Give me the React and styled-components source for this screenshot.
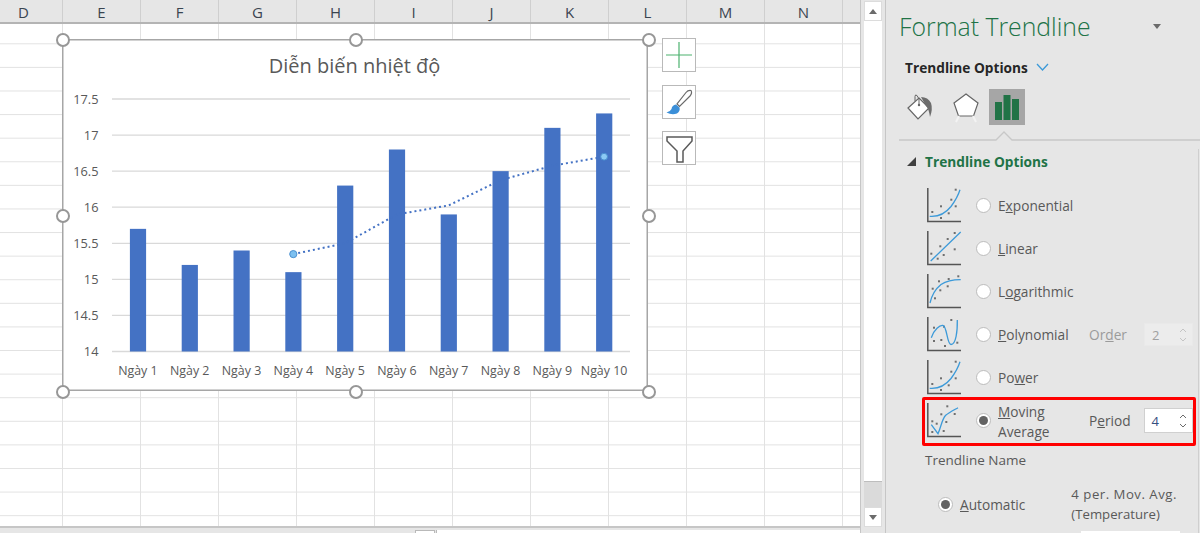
import styled, { createGlobalStyle } from 'styled-components'

const columns = ['D', 'E', 'F', 'G', 'H', 'I', 'J', 'K', 'L', 'M', 'N']
const days = [15.7, 15.2, 15.4, 15.1, 16.3, 16.8, 15.9, 16.5, 17.1, 17.3]
const ticks = [17.5, 17, 16.5, 16, 15.5, 15, 14.5, 14]
const handles = [[0, 0], [50, 0], [100, 0], [0, 50], [100, 50], [0, 100], [50, 100], [100, 100]]

// chart drawing coordinates, origin at the frame corner
const plotLeft = 50
const plotWidth = 518
const topY = 60
const baseY = 312.5
const yOf = (v) => baseY - ((v - 14) / 3.5) * (baseY - topY)
const xOf = (i) => plotLeft + (plotWidth / 10) * (i + 0.5)
const trend = days
  .map((_, i) => (i < 3 ? null : (days[i] + days[i - 1] + days[i - 2] + days[i - 3]) / 4))
  .map((v, i) => (v === null ? null : [xOf(i), yOf(v)]))
  .filter(Boolean)

const GlobalStyle = createGlobalStyle`
  html, body { margin: 0; padding: 0; background: #e6e6e6; }
  body { font-family: "Open Sans", "Noto Sans", sans-serif; overflow: hidden; }
`

const Window = styled.div`
  display: flex;
  width: 1200px;
  height: 533px;
  overflow: hidden;
`

const SheetColumn = styled.div`
  position: relative;
  width: 860px;
  flex: none;
  display: flex;
  flex-direction: column;
  background: #fff;
`

const HeaderRow = styled.div`
  display: flex;
  height: 22px;
  flex: none;
  margin-left: -15px;
  background: #e6e6e6;
  border-bottom: 2px solid #b4b4b4;
`

const ColHead = styled.div`
  width: 78px;
  flex: none;
  box-sizing: border-box;
  border-right: 1px solid #cfcfcf;
  text-align: center;
  font-size: 15px;
  line-height: 25px;
  color: #3a4450;
`

const Cells = styled.div`
  flex: 1;
  background-color: #fff;
  background-image: linear-gradient(to right, #e2e2e2 1px, transparent 1px),
    linear-gradient(to bottom, #e2e2e2 1px, transparent 1px);
  background-size: 78px 100%, 100% 23.6px;
  background-position: 62px 0, 0 19.3px;
`

const BottomBar = styled.div`
  height: 5px;
  flex: none;
  display: flex;
  padding-left: 34px;
  background: #e6e6e6;
  border-top: 2px solid #c6c6c6;
`

const HScrollEnd = styled.div`
  margin-left: 381px;
  width: 18px;
  background: #fff;
  border: 1px solid #b9b9b9;
  border-bottom: 0;
  margin-top: 2px;
`

const HScrollThumb = styled.div`
  flex: 1;
  margin: 2px 0 0 1px;
  background: #fff;
  border-left: 1px solid #b9b9b9;
`

const VScroll = styled.div`
  width: 26px;
  flex: none;
  box-sizing: border-box;
  padding: 1px 3px 0 3px;
  display: flex;
  flex-direction: column;
  background: #e6e6e6;
  border-left: 1px solid #c6c6c6;
  border-right: 1px solid #c6c6c6;
`

const ScrollButton = styled.div`
  height: 20px;
  flex: none;
  background: #fff;
  border: 1px solid #dcdcdc;
  box-sizing: border-box;
  display: flex;
  align-items: center;
  justify-content: center;
`

const Arrow = styled.span`
  width: 0;
  height: 0;
  border-left: 4px solid transparent;
  border-right: 4px solid transparent;
  border-${(p) => (p.$down ? 'top' : 'bottom')}: 5px solid #6b6b6b;
`

const ScrollThumb = styled.div`
  height: 461px;
  flex: none;
  background: #fff;
  border-bottom: 1px solid #bdbdbd;
  box-sizing: border-box;
`

const ScrollTrack = styled.div`
  height: 25px;
  flex: none;
  background: #dadada;
`

/* overlays on the sheet */
const ChartFrame = styled.div`
  position: absolute;
  left: 62px;
  top: 39px;
  width: 586px;
  height: 352px;
  background: #fff;
  box-shadow: inset 0 0 0 1.5px #a6a6a6;
`

const ChartSvg = styled.svg`
  display: block;
  text {
    font-family: "Open Sans", "Noto Sans", sans-serif;
    fill: #595959;
  }
`

const Handle = styled.span`
  position: absolute;
  left: ${(p) => p.$x}%;
  top: ${(p) => p.$y}%;
  width: 14px;
  height: 14px;
  box-sizing: border-box;
  margin: -6.5px 0 0 -6.5px;
  border-radius: 50%;
  background: #fff;
  border: 2px solid #979797;
`

const ChartTools = styled.div`
  position: absolute;
  left: 662px;
  top: 38px;
  display: flex;
  flex-direction: column;
  gap: 12.5px;
`

const ToolButton = styled.div`
  width: 34px;
  height: 34px;
  box-sizing: border-box;
  background: #fff;
  border: 1px solid #b9b9b9;
  display: flex;
  align-items: center;
  justify-content: center;
`

/* format pane */
const Pane = styled.aside`
  position: relative;
  flex: 1;
  background: #e6e6e6;
  display: flex;
  flex-direction: column;
  min-width: 0;
`

const PaneHead = styled.div`
  display: flex;
  align-items: center;
  justify-content: space-between;
  height: 52px;
  padding: 0 39px 0 13px;
`

const PaneTitle = styled.h1`
  margin: 0;
  font-size: 24.8px;
  font-weight: 300;
  color: #217346;
  letter-spacing: 0;
`

const Picker = styled.div`
  display: flex;
  align-items: center;
  gap: 8px;
  height: 30px;
  padding-left: 19px;
  font-size: 13.7px;
  font-weight: 700;
  color: #262626;
`

const IconTabs = styled.div`
  display: flex;
  align-items: center;
  height: 36px;
  margin-top: 7px;
  padding-left: 16px;
`

const IconTab = styled.div`
  width: 36px;
  height: 36px;
  margin-right: ${(p) => p.$gap || 0}px;
  display: flex;
  align-items: center;
  justify-content: center;
  background: ${(p) => (p.$active ? '#a6a6a6' : 'transparent')};
`

const Divider = styled.div`
  height: 18px;
  margin-left: 13px;
  flex: none;
  svg { display: block; }
`

const SectionHead = styled.div`
  display: flex;
  align-items: center;
  gap: 9px;
  height: 18px;
  margin-top: 9px;
  padding-left: 21px;
  font-size: 13.7px;
  font-weight: 700;
  color: #217346;
`

const CornerArrow = styled.span`
  width: 0;
  height: 0;
  border-style: solid;
  border-width: 0 0 9px 9px;
  border-color: transparent transparent #404040 transparent;
`

const PaneEdge = styled.div`
  position: absolute;
  right: 1px;
  top: 149px;
  bottom: 0;
  width: 1px;
  background: #cfcfcf;
`

const Options = styled.div`
  display: flex;
  flex-direction: column;
  margin-top: 14px;
  padding-left: 41px;
`

const OptionRow = styled.div`
  display: flex;
  align-items: center;
  height: 43px;
  box-sizing: border-box;
`

const HighlightBox = styled.div`
  position: absolute;
  left: 36px;
  top: 397px;
  width: 274px;
  height: 49px;
  box-sizing: border-box;
  border: 3px solid #f00;
  border-radius: 2px;
  pointer-events: none;
`

const Radio = styled.span`
  flex: none;
  width: 15px;
  height: 15px;
  margin: ${(p) => p.$margin || '0 7px 0 14px'};
  box-sizing: border-box;
  border-radius: 50%;
  background: #fff;
  border: 1px solid #bcbcbc;
  display: flex;
  align-items: center;
  justify-content: center;
  &::after {
    content: '';
    display: ${(p) => (p.$on ? 'block' : 'none')};
    width: 9px;
    height: 9px;
    border-radius: 50%;
    background: #636363;
  }
`

const OptionLabel = styled.span`
  width: ${(p) => p.$w || 'auto'};
  flex: none;
  padding-top: ${(p) => p.$pt || 0}px;
  font-size: 13.7px;
  line-height: 19.5px;
  color: ${(p) => (p.$off ? '#9b9b9b' : '#595959')};
`

const SpinBox = styled.div`
  width: 49px;
  height: ${(p) => p.$h}px;
  margin-left: ${(p) => p.$ml}px;
  flex: none;
  box-sizing: border-box;
  padding-left: 7px;
  display: flex;
  align-items: center;
  justify-content: space-between;
  font-size: 13px;
  background: ${(p) => (p.$off ? '#ececec' : '#fff')};
  color: ${(p) => (p.$off ? '#a0a0a0' : '#35507f')};
  border: 1px solid ${(p) => (p.$off ? '#e9e9e9' : '#d0d0d0')};
`

const Spinners = styled.span`
  width: 14px;
  margin-right: 2px;
  display: flex;
  flex-direction: column;
  gap: 4px;
  align-items: center;
`

const FieldTitle = styled.div`
  margin: 9px 0 0 39px;
  font-size: 13.5px;
  color: #595959;
`

const AutoRow = styled.div`
  display: flex;
  align-items: center;
  margin-top: 16px;
  padding-left: 52px;
`

const AutoName = styled.div`
  margin-left: 46px;
  font-size: 13.2px;
  line-height: 19.5px;
  color: #595959;
  white-space: nowrap;
`

const AutoNameWide = styled.span`
  letter-spacing: 0.5px;
`

const NameInput = styled.div`
  position: absolute;
  left: 195px;
  right: 20px;
  bottom: 0;
  height: 2px;
  background: #fff;
`

const Chevron = ({ up, color }) => (
  <svg width="8" height="5" viewBox="0 0 8 5">
    <path d={up ? 'M1 4 L4 1 L7 4' : 'M1 1 L4 4 L7 1'} fill="none" stroke={color} strokeWidth="1" />
  </svg>
)

const Spin = ({ color }) => (
  <Spinners>
    <Chevron up color={color} />
    <Chevron color={color} />
  </Spinners>
)

const Dots = ({ points }) =>
  points.map(([x, y], i) => <rect key={i} x={x - 1} y={y - 1} width="2" height="2" fill="#6f6f6f" />)

const CurveIcon = ({ d, dots }) => (
  <svg width="35" height="35" viewBox="0 0 35 35" style={{ flex: 'none' }}>
    <path d="M0.8 0 V33.5 H34" fill="none" stroke="#555" strokeWidth="1.5" />
    <Dots points={dots} />
    <path d={d} fill="none" stroke="#3c9ad9" strokeWidth="1.3" />
  </svg>
)

const curveDots = {
  exp: [[5.3, 24], [14, 30], [14, 18.3], [21.7, 25.3], [24.3, 11.7], [28.7, 18.3], [28.7, 1.7]],
  lin: [[4.3, 22.7], [10.7, 27.7], [13.3, 15.3], [16.7, 24], [20.7, 8], [27.7, 18.3], [27.7, 2]],
  log: [[5.7, 14.7], [8, 24.3], [12, 7.3], [13.3, 16.3], [20.7, 12.3], [21.7, 5], [31.3, 2.3]],
  poly: [[7, 10.7], [7, 24], [14.3, 23], [17, 9.7], [18, 29], [24.3, 3], [30.3, 25.7]],
  avg: [[5.3, 18.3], [5.3, 29], [9.7, 20.7], [14.3, 11.3], [16.7, 28], [20.3, 3.3], [19.3, 19], [27.7, 11]],
}

const curves = {
  exp: 'M2.7 28.3 C11 29 18 26 24 18.5 C28 13 31 8 33 1.7',
  lin: 'M3.7 30 L33.7 1',
  log: 'M3 29 C5 20 9 14.5 14 10.5 C20 6.5 27 5.7 33.7 5.7',
  poly: 'M4.3 20.7 C7 12 13 8 16 8.5 C20 9 20 27.5 24 27.5 C29 27.5 30.5 14 30.3 3',
  avg: 'M4.3 21.7 L11 30.7 C14 24 15 16 18.7 12.3 C22 9.5 27 7 31 4.7',
}

const FillIcon = () => (
  <svg width="30" height="30" viewBox="0 0 30 30">
    <path d="M3 16 L14 6 L24 16 L13 27 Z" fill="#fff" stroke="#666" strokeWidth="1.2" />
    <path d="M10 9 V4.5 Q10 2 12 3.5 L14 7 V12" fill="none" stroke="#666" strokeWidth="1" />
    <circle cx="14" cy="13" r="1.2" fill="#666" />
    <path d="M16 5 Q23 5 26 11 Q28 17 25 25 Q24 17 21 14 Z" fill="#6d6d6d" />
  </svg>
)

const ShapeIcon = () => (
  <svg width="30" height="32" viewBox="0 0 30 32">
    <path d="M15 3 L27 12 L22.5 25 H7.5 L3 12 Z" fill="#fff" stroke="#666" strokeWidth="1.2" />
    <path d="M8 25 L5 31 M22 25 L25 31" stroke="#f3f3f3" strokeWidth="2" />
  </svg>
)

const BarsIcon = () => (
  <svg width="26" height="27" viewBox="0 0 26 27">
    <rect x="1" y="8" width="7" height="18" fill="#217346" />
    <rect x="9.5" y="1" width="7" height="25" fill="#217346" />
    <rect x="18" y="5" width="7" height="21" fill="#217346" />
  </svg>
)

const Chart = () => (
  <ChartSvg width="585" height="351" viewBox="0 0 585 351">
    <text x="292.5" y="34" textAnchor="middle" fontSize="20">Diễn biến nhiệt độ</text>
    {ticks.map((t) => (
      <g key={t}>
        <line x1={plotLeft} x2={plotLeft + plotWidth} y1={yOf(t)} y2={yOf(t)} stroke="#d9d9d9" strokeWidth="1.3" />
        <text x="36.5" y={yOf(t) + 4.5} textAnchor="end" fontSize="12.8">{t}</text>
      </g>
    ))}
    {days.map((v, i) => (
      <g key={i}>
        <rect x={xOf(i) - 8} y={yOf(v)} width="16.2" height={baseY - yOf(v)} fill="#4472c4" />
        <text x={xOf(i)} y="336" textAnchor="middle" fontSize="12.4">Ngày {i + 1}</text>
      </g>
    ))}
    <polyline
      points={trend.map((p) => p.join(',')).join(' ')}
      fill="none"
      stroke="#4472c4"
      strokeWidth="2"
      strokeDasharray="2 3"
    />
    <circle cx={trend[0][0]} cy={trend[0][1]} r="3.6" fill="#7cc0f0" stroke="#4a90d0" />
    <circle cx={trend[6][0]} cy={trend[6][1]} r="3.4" fill="#8ccaf4" stroke="#4a90d0" />
  </ChartSvg>
)

export default function App() {
  return (
    <Window>
      <GlobalStyle />
      <SheetColumn>
        <HeaderRow>
          {columns.map((c) => <ColHead key={c}>{c}</ColHead>)}
        </HeaderRow>
        <Cells />
        <BottomBar>
          <HScrollEnd />
          <HScrollThumb />
        </BottomBar>
        <ChartFrame>
          <Chart />
          {handles.map(([x, y]) => <Handle key={`${x}-${y}`} $x={x} $y={y} />)}
        </ChartFrame>
        <ChartTools>
          <ToolButton>
            <svg width="26" height="26" viewBox="0 0 26 26">
              <path d="M13 0 V26 M0 13 H26" stroke="#4cb26f" strokeWidth="1.2" />
            </svg>
          </ToolButton>
          <ToolButton>
            <svg width="30" height="30" viewBox="0 0 30 30">
              <path d="M27 3.5 Q24 3 22 5.5 L13 17 L15.5 19.5 L26 9 Q28.5 6 27 3.5 Z" fill="#fff" stroke="#6a6a6a" strokeWidth="1.2" />
              <path d="M12 17.5 Q8 18 7.5 22 Q6 25 2.5 25.5 Q8 28.5 13 26.5 Q16.5 24 15.5 20.5 Z" fill="#3b8fd8" />
            </svg>
          </ToolButton>
          <ToolButton>
            <svg width="30" height="30" viewBox="0 0 30 30">
              <path d="M3 4 H28 V8 L19 18 V29 H13 V18 L3 8 Z" fill="#fff" stroke="#5a5a5a" strokeWidth="1.5" />
            </svg>
          </ToolButton>
        </ChartTools>
      </SheetColumn>

      <VScroll>
        <ScrollButton><Arrow /></ScrollButton>
        <ScrollThumb />
        <ScrollTrack />
        <ScrollButton><Arrow $down /></ScrollButton>
      </VScroll>

      <Pane>
        <PaneHead>
          <PaneTitle>Format Trendline</PaneTitle>
          <Arrow $down />
        </PaneHead>
        <Picker>
          Trendline Options
          <svg width="13" height="8" viewBox="0 0 13 8">
            <path d="M1 1 L6.5 7 L12 1" fill="none" stroke="#3c9ad9" strokeWidth="1.3" />
          </svg>
        </Picker>
        <IconTabs>
          <IconTab $gap={10}><FillIcon /></IconTab>
          <IconTab $gap={5}><ShapeIcon /></IconTab>
          <IconTab $active><BarsIcon /></IconTab>
        </IconTabs>
        <Divider>
          <svg width="301" height="18" viewBox="0 0 301 18">
            <path d="M0 15 H97 L105 7 L113 15 H301" fill="none" stroke="#c8c8c8" strokeWidth="1.3" />
          </svg>
        </Divider>
        <SectionHead><CornerArrow />Trendline Options</SectionHead>
        <PaneEdge />
        <Options>
          <OptionRow>
            <CurveIcon d={curves.exp} dots={curveDots.exp} />
            <Radio />
            <OptionLabel>E<u>x</u>ponential</OptionLabel>
          </OptionRow>
          <OptionRow>
            <CurveIcon d={curves.lin} dots={curveDots.lin} />
            <Radio />
            <OptionLabel><u>L</u>inear</OptionLabel>
          </OptionRow>
          <OptionRow>
            <CurveIcon d={curves.log} dots={curveDots.log} />
            <Radio />
            <OptionLabel>L<u>o</u>garithmic</OptionLabel>
          </OptionRow>
          <OptionRow>
            <CurveIcon d={curves.poly} dots={curveDots.poly} />
            <Radio />
            <OptionLabel $w="91px"><u>P</u>olynomial</OptionLabel>
            <OptionLabel $off>Or<u>d</u>er</OptionLabel>
            <SpinBox $off $h={23} $ml={17}>2<Spin color="#c4c4c4" /></SpinBox>
          </OptionRow>
          <OptionRow>
            <CurveIcon d={curves.exp} dots={curveDots.exp} />
            <Radio />
            <OptionLabel>Po<u>w</u>er</OptionLabel>
          </OptionRow>
          <OptionRow>
            <CurveIcon d={curves.avg} dots={curveDots.avg} />
            <Radio $on />
            <OptionLabel $w="91px" $pt={2}><u>M</u>oving<br />Average</OptionLabel>
            <OptionLabel $pt={1}>P<u>e</u>riod</OptionLabel>
            <SpinBox $h={25} $ml={13}>4<Spin color="#6b6b6b" /></SpinBox>
          </OptionRow>
        </Options>
        <FieldTitle>Trendline Name</FieldTitle>
        <AutoRow>
          <Radio $on $margin="0 7px 0 0" />
          <OptionLabel><u>A</u>utomatic</OptionLabel>
          <AutoName><AutoNameWide>4 per. Mov. Avg.</AutoNameWide><br />(Temperature)</AutoName>
        </AutoRow>
        <NameInput />
        <HighlightBox />
      </Pane>
    </Window>
  )
}
